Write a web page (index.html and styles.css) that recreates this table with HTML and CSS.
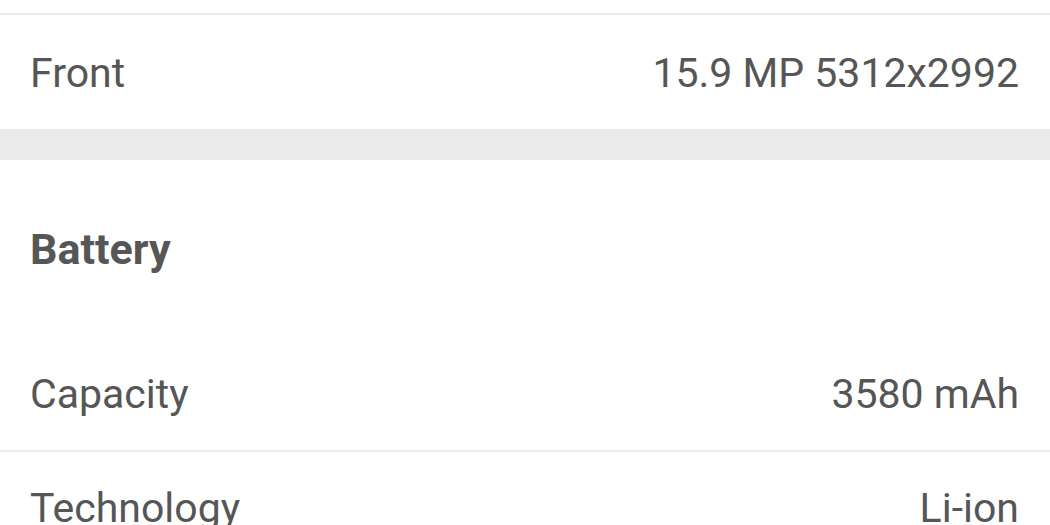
FILE: index.html
```html
<!DOCTYPE html>
<html>
<head>
<meta charset="utf-8">
<link rel="stylesheet" href="styles.css">
</head>
<body>
<div class="page">
  <div class="section">
    <div class="row row-first bordered-top">
      <span class="label">Front</span>
      <span class="value">15.9 MP 5312x2992</span>
    </div>
  </div>
  <div class="spacer"></div>
  <div class="section">
    <div class="header">Battery</div>
    <div class="row">
      <span class="label">Capacity</span>
      <span class="value">3580 mAh</span>
    </div>
    <div class="row bordered-top">
      <span class="label">Technology</span>
      <span class="value">Li-ion</span>
    </div>
  </div>
</div>
</body>
</html>
```

FILE: styles.css
```css
html, body {
  margin: 0;
  padding: 0;
  background: #ffffff;
}
.page {
  width: 1050px;
  height: 525px;
  overflow: hidden;
  padding-top: 13px;
  box-sizing: border-box;
  font-family: Roboto, "Liberation Sans", sans-serif;
  color: #555655;
}
.section {
  display: flex;
  flex-direction: column;
  background: #ffffff;
}
.row {
  display: flex;
  justify-content: space-between;
  align-items: center;
  height: 112px;
  padding: 0 31px 0 30px;
  font-size: 41px;
  flex-shrink: 0;
}
.row-first {
  height: 113px;
  padding-top: 1px;
}
.bordered-top {
  border-top: 2px solid #ececec;
}
.spacer {
  height: 31px;
  background: #ebebeb;
}
.header {
  height: 178px;
  display: flex;
  align-items: center;
  padding: 0 30px;
  font-size: 43px;
  font-weight: 700;
  color: #555655;
  flex-shrink: 0;
}
```
